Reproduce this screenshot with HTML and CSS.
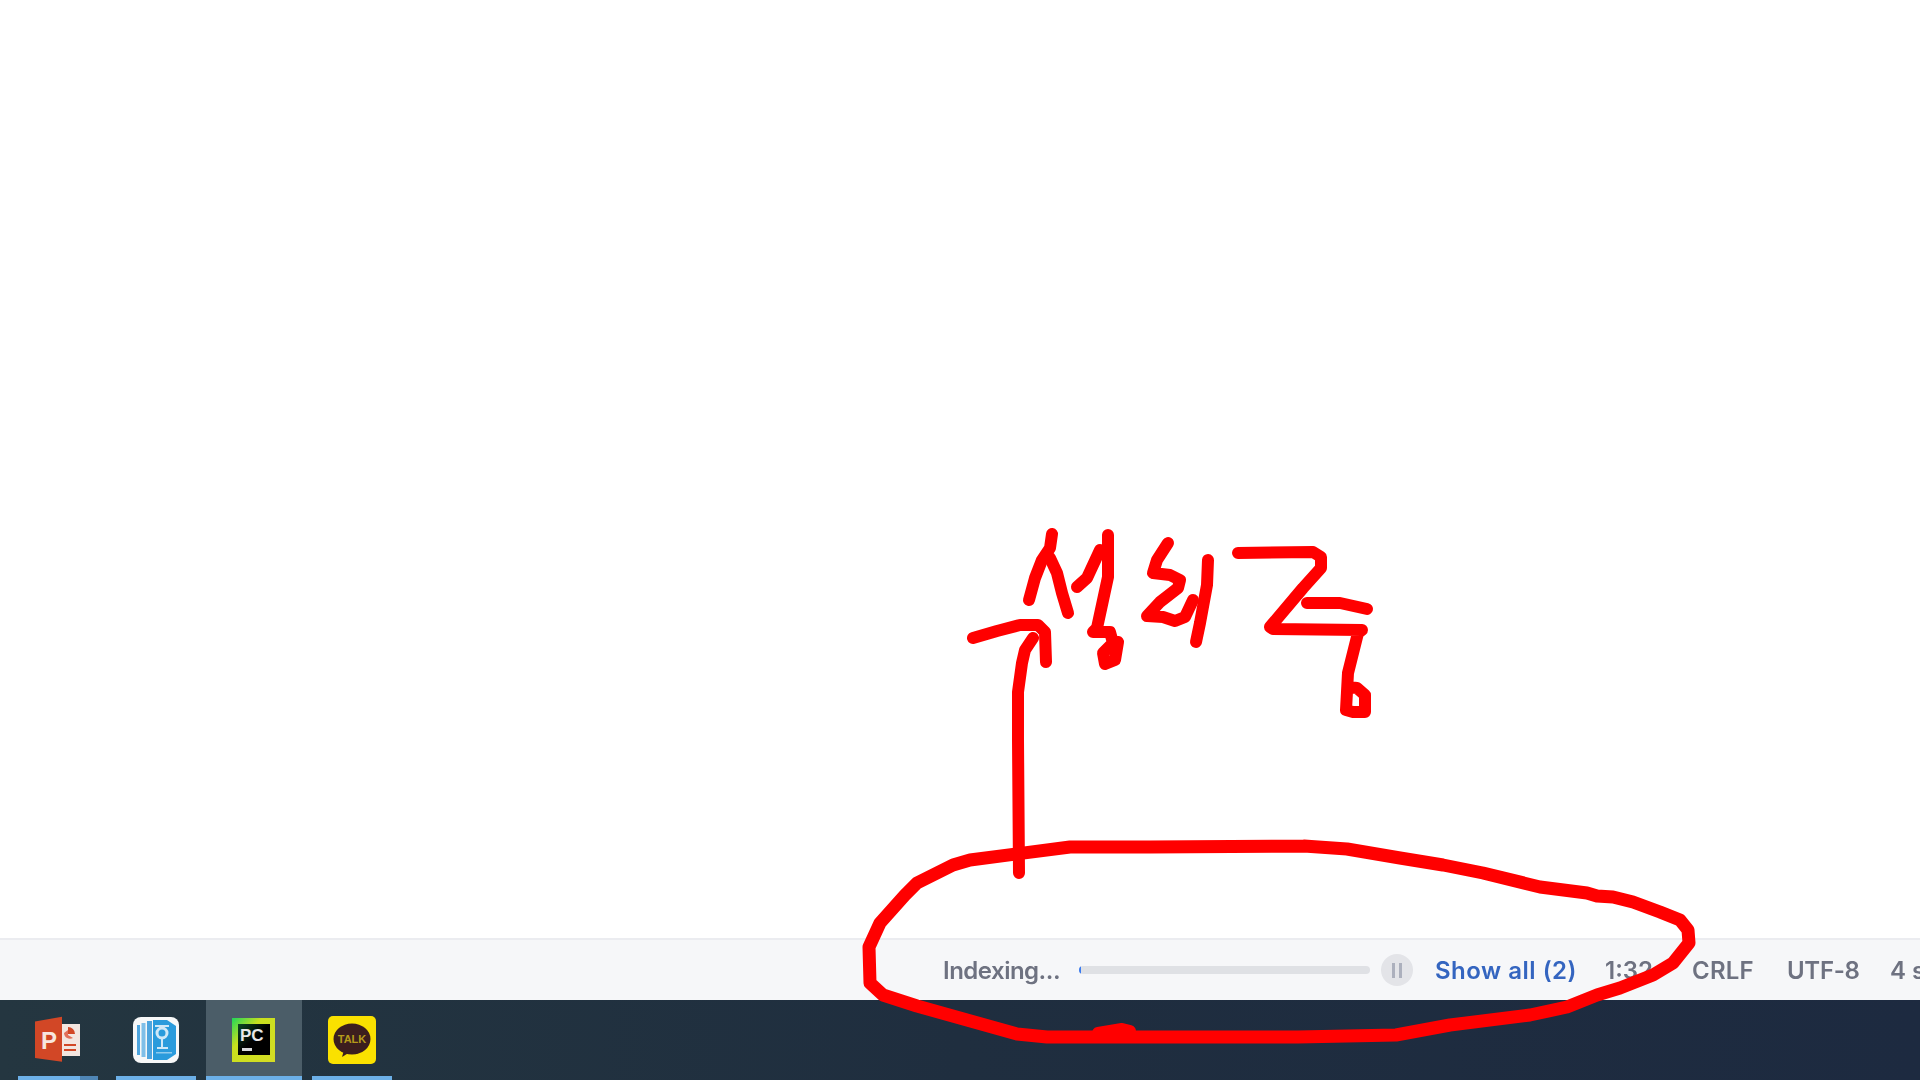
FILE: index.html
```html
<!DOCTYPE html>
<html lang="en">
<head>
  <meta charset="UTF-8">
  <title>Indexing</title>
  <link rel="stylesheet" href="styles.css">
</head>
<body>
  <main class="editor"></main>

  <footer class="status">
    <span class="status-label">Indexing...</span>
    <div class="progress"><div class="progress-fill"></div></div>
    <div class="pause"><i></i><i></i></div>
    <a class="show-all">Show all (2)</a>
    <span class="status-item pos">1:32</span>
    <span class="status-item crlf">CRLF</span>
    <span class="status-item utf">UTF-8</span>
    <span class="status-item">4 spaces</span>
  </footer>

  <nav class="taskbar">
    <div class="task split">
      <svg viewBox="0 0 48 48" width="48" height="48">
        <rect x="26" y="8" width="20" height="32" fill="#f3e6e0"/>
        <path d="M34 11v7h7a7 7 0 0 0-7-7z" fill="#d24726"/>
        <path d="M30 17a6 6 0 0 0 9 5l-5-3v-5z" fill="#e2705a"/>
        <rect x="30" y="28" width="12" height="2" fill="#d24726"/>
        <rect x="30" y="33" width="12" height="2" fill="#d24726"/>
        <polygon points="1,5.600 28,0.700 28,45.700 1,42" fill="#d24726"/>
        <text x="7" y="33" class="ppt-p">P</text>
      </svg>
    </div>
    <div class="task">
      <svg viewBox="0 0 48 48" width="48" height="48">
        <rect x="1" y="1" width="46" height="46" rx="8" fill="#f7f8f8"/>
        <rect x="5" y="9" width="3" height="30" fill="#4ea5de"/>
        <rect x="9.500" y="7" width="4" height="34" fill="#7fbfe8"/>
        <rect x="15" y="5" width="5" height="38" fill="#4ea5de"/>
        <polygon points="21,4 35,4 44,10 44,38 35,44 21,44" fill="#2a9bdc"/>
        <circle cx="30" cy="17" r="5" fill="none" stroke="#cfe8f7" stroke-width="3"/>
        <path d="M23 10h14M30 22v10M25 32h11" stroke="#cfe8f7" stroke-width="2" fill="none"/>
        <rect x="24" y="36" width="16" height="1.500" fill="#8fcbed"/>
      </svg>
    </div>
    <div class="task active">
      <svg viewBox="0 0 48 48" width="48" height="48">
        <defs>
          <linearGradient id="pcEdge" x1="0" y1="0" x2="1" y2="1">
            <stop offset="0" stop-color="#1fd65a"/>
            <stop offset="0.35" stop-color="#c8e01e"/>
            <stop offset="1" stop-color="#d6dc24"/>
          </linearGradient>
          <linearGradient id="pcInner" x1="0" y1="0" x2="1" y2="1">
            <stop offset="0" stop-color="#0c4a24"/>
            <stop offset="0.5" stop-color="#000"/>
          </linearGradient>
        </defs>
        <rect x="2" y="2" width="43" height="44" fill="url(#pcEdge)"/>
        <rect x="8" y="8" width="32" height="31" fill="url(#pcInner)"/>
        <text x="10" y="25" class="pc-text">PC</text>
        <rect x="12" y="32" width="10" height="3" fill="#d8dadc"/>
      </svg>
    </div>
    <div class="task">
      <svg viewBox="0 0 48 48" width="48" height="48">
        <rect width="48" height="48" rx="5" fill="#fae100"/>
        <path d="M16 34l-2 7 8-5z" fill="#3c1e1e"/>
        <ellipse cx="24" cy="23" rx="18.500" ry="15.500" fill="#3c1e1e"/>
        <text x="24" y="27" class="talk">TALK</text>
      </svg>
    </div>
  </nav>

  <!-- pen marks drawn over the screen -->
  <svg class="ink" viewBox="0 0 1920 1080" width="1920" height="1080">
    <g class="pen">
      <polyline points="1019,873 1018,740 1018,692 1022,663 1025,650 1033,638"/>
      <polyline points="973,638 997,631 1020,625 1038,625 1045,632 1046,662"/>
      <polyline points="1052,534 1050,548 1042,560 1035,578 1029,600"/>
      <polyline points="1050,558 1057,573 1062,593 1068,613"/>
      <polyline points="1077,587 1087,578 1100,550"/>
      <polyline points="1108,535 1108,577 1097,628 1093,632 1110,632 1113,643 1103,653 1105,664 1115,660 1118,642"/>
      <polyline points="1168,543 1157,560 1153,573 1170,575 1180,580 1178,588 1160,602 1147,616 1163,617 1175,621 1185,617 1193,600"/>
      <polyline points="1208,560 1207,585 1200,623 1196,642"/>
      <polyline points="1238,553 1313,552 1321,557 1321,568 1303,588 1270,627 1273,629 1362,630 1358,633 1348,673 1346,710 1353,712 1365,712 1365,695 1357,688 1348,687"/>
      <polyline points="1307,603 1340,603 1367,609"/>
    </g>
    <polyline class="pen loop" points="1304,846 1347,849 1400,858 1443,865 1483,873 1540,887 1587,893 1597,896 1613,897 1633,902 1660,912 1680,920 1688,930 1689,943 1673,963 1653,975 1620,988 1597,995 1567,1007 1530,1015 1450,1025 1396,1035 1298,1037 1133,1037 1047,1037 1017,1034 967,1020 917,1006 883,995 870,983 869,947 880,923 905,895 917,883 953,865 970,860 1070,847 1150,847 1304,846"/>
    <polyline class="pen bump" points="1098,1033 1122,1029 1130,1031"/>
  </svg>
</body>
</html>
```

FILE: styles.css
```css
* { box-sizing: border-box; }
html, body { height: 100%; }
body {
  margin: 0;
  display: flex;
  flex-direction: column;
  overflow: hidden;
  background: #fff;
  font-family: Inter, "Noto Sans", sans-serif;
}

.editor { flex: 1; background: #fff; }

/* status bar */
.status {
  height: 62px;
  flex: none;
  display: flex;
  align-items: center;
  padding-left: 943px;
  background: #f6f7f9;
  border-top: 2px solid #ebecf0;
  font-size: 24px;
  font-weight: 600;
  color: #6e7281;
  white-space: nowrap;
  overflow: hidden;
  filter: blur(0.6px);
}
.status > * { flex: none; }
.status-label { width: 136px; letter-spacing: -0.5px; }
.progress {
  width: 291px;
  height: 8px;
  background: #dfe1e5;
  border-radius: 4px;
  overflow: hidden;
}
.progress-fill { width: 2px; height: 100%; background: #3b7cf0; }
.pause {
  width: 32px;
  height: 32px;
  margin-left: 11px;
  border-radius: 50%;
  background: #e3e4e8;
  display: flex;
  align-items: center;
  justify-content: center;
  gap: 4px;
}
.pause i { width: 3px; height: 15px; background: #acb0bd; }
.show-all { margin-left: 22px; width: 170px; color: #3465c0; letter-spacing: 0.5px; }
.pos { width: 87px; }
.crlf { width: 95px; letter-spacing: 0.2px; }
.utf { width: 103px; letter-spacing: -0.3px; }

/* windows taskbar */
.taskbar {
  height: 80px;
  flex: none;
  display: flex;
  gap: 2px;
  padding-left: 10px;
  background: linear-gradient(90deg, #243640, #1f2e3f 50%, #1d2a40);
}
.task {
  position: relative;
  width: 96px;
  display: flex;
  align-items: center;
  justify-content: center;
}
.task::after {
  content: "";
  position: absolute;
  left: 8px;
  right: 8px;
  bottom: 0;
  height: 4px;
  background: #6cb0e8;
}
.task.split::after { background: linear-gradient(90deg, #6cb0e8 77%, #4f86b5 77%); }
.task.active { background: #4b5d68; }
.task.active::after { left: 0; right: 0; }

.ppt-p { font: 700 24px "Liberation Sans", sans-serif; fill: #f7e6df; }
.pc-text { font: 700 17px "Liberation Sans", sans-serif; fill: #e8e8e8; }
.talk { font: 800 11px "Liberation Sans", sans-serif; fill: #b59a1a; text-anchor: middle; }

/* pen overlay */
.ink { position: absolute; left: 0; top: 0; pointer-events: none; }
.pen {
  fill: none;
  stroke: #f00;
  stroke-width: 12;
  stroke-linecap: round;
  stroke-linejoin: round;
}
.loop { stroke-width: 13; }
```
